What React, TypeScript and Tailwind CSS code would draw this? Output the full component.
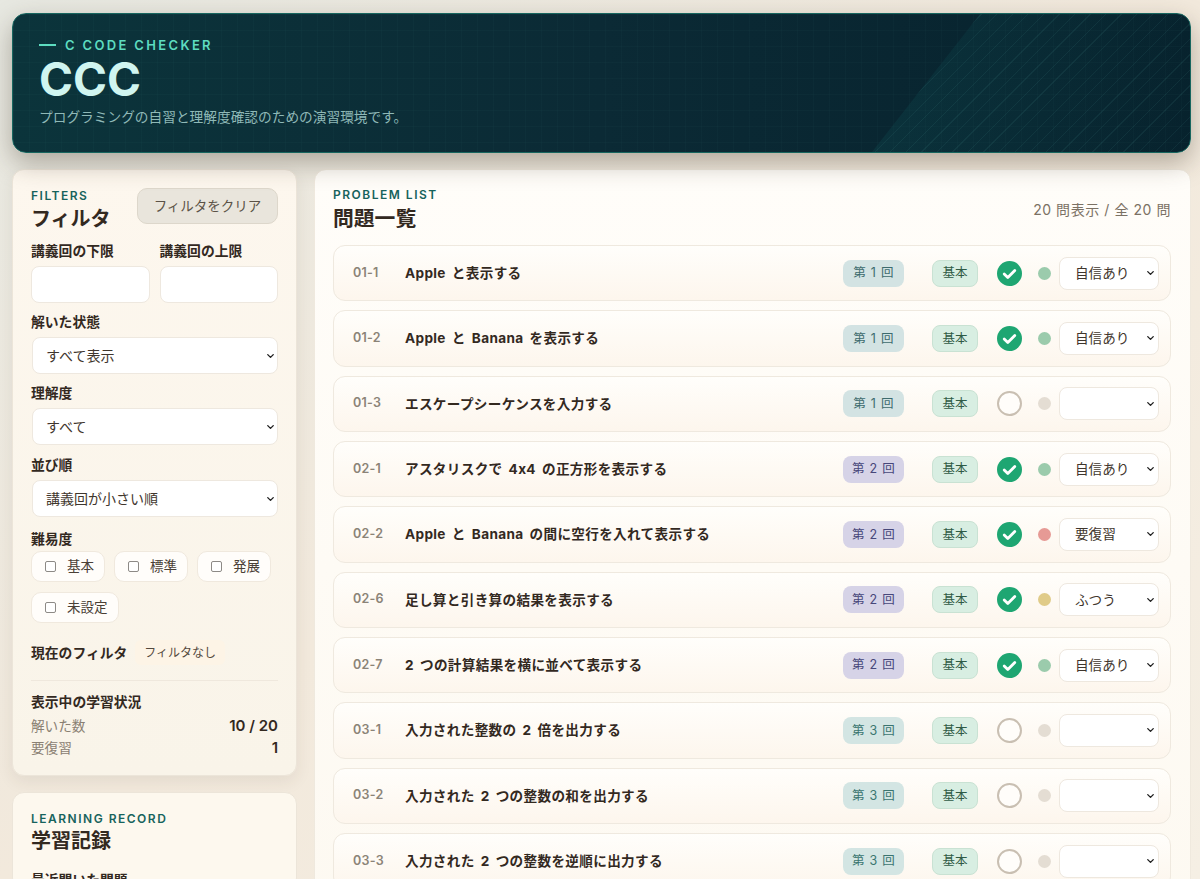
import type { ReactNode } from 'react'
import { ChevronDown } from 'lucide-react'

const FONT = "font-['Inter','Noto_Sans_CJK_JP',sans-serif]"

const problems = [
  { id: '01-1', title: 'Apple と表示する', lecture: 1, done: true, level: '自信あり' },
  { id: '01-2', title: 'Apple と Banana を表示する', lecture: 1, done: true, level: '自信あり' },
  { id: '01-3', title: 'エスケープシーケンスを入力する', lecture: 1, done: false, level: '' },
  { id: '02-1', title: 'アスタリスクで 4x4 の正方形を表示する', lecture: 2, done: true, level: '自信あり' },
  { id: '02-2', title: 'Apple と Banana の間に空行を入れて表示する', lecture: 2, done: true, level: '要復習' },
  { id: '02-6', title: '足し算と引き算の結果を表示する', lecture: 2, done: true, level: 'ふつう' },
  { id: '02-7', title: '2 つの計算結果を横に並べて表示する', lecture: 2, done: true, level: '自信あり' },
  { id: '03-1', title: '入力された整数の 2 倍を出力する', lecture: 3, done: false, level: '' },
  { id: '03-2', title: '入力された 2 つの整数の和を出力する', lecture: 3, done: false, level: '' },
  { id: '03-3', title: '入力された 2 つの整数を逆順に出力する', lecture: 3, done: false, level: '' },
]

const lectureStyle: Record<number, string> = {
  1: 'bg-[#d3e3e3] text-[#3d6b6e]',
  2: 'bg-[#d6d3e7] text-[#47477a]',
  3: 'bg-[#d3e5e3] text-[#3a7570]',
}

const dotStyle: Record<string, string> = {
  '': 'bg-[#e4ddd3]',
  自信あり: 'bg-[#9bcbac]',
  要復習: 'bg-[#e69a95]',
  ふつう: 'bg-[#e0cb88]',
}

function Eyebrow({ children }: { children: ReactNode }) {
  return <div className="text-[12px] leading-[14px] font-semibold tracking-[0.125em] text-[#17635c]">{children}</div>
}

function Label({ children }: { children: ReactNode }) {
  return <div className="text-[13.8px] leading-[18px] font-bold text-[#33291f]">{children}</div>
}

function NativeSelect({ value, options, className, chevron, text }: { value: string; options: string[]; className: string; chevron: string; text: string }) {
  return (
    <div className={`relative ${className}`}>
      <select
        defaultValue={value}
        className={`appearance-none w-full h-full bg-white border border-[#eee8df] rounded-[8px] text-[#3f362d] ${text}`}
      >
        {options.map((o) => (
          <option key={o} value={o}>{o}</option>
        ))}
      </select>
      <ChevronDown size={11} strokeWidth={3} className={`absolute top-1/2 -translate-y-1/2 pointer-events-none text-[#222] ${chevron}`} />
    </div>
  )
}

function Chip({ label }: { label: string }) {
  return (
    <label className="h-[31px] pl-[13px] pr-[10px] flex items-center gap-[11px] bg-[#fffdfa] border border-[#f0e9de] rounded-[10px] text-[13.5px] text-[#4a4036]">
      <input type="checkbox" className="appearance-none w-[11px] h-[11px] bg-white border border-[#8d8a86] rounded-[2px]" />
      {label}
    </label>
  )
}

function Row({ p }: { p: (typeof problems)[number] }) {
  return (
    <div className="h-[56.33px] shrink-0 pl-[19px] pr-[11px] flex items-center rounded-[12px] border border-[#efe9df] bg-gradient-to-b from-[#fffefb] to-[#fdf6ed]">
      <span className="w-[52px] text-[12.5px] font-semibold tracking-[0.02em] text-[#8b8377]">{p.id}</span>
      <span className="flex-1 text-[13.6px] font-bold tracking-[0.025em] [word-spacing:2.5px] text-[#33291f]">{p.title}</span>
      <span className={`w-[61px] h-[27px] pt-[1px] flex items-center justify-center rounded-[8px] text-[12.5px] tracking-[0.02em] [word-spacing:1px] ${lectureStyle[p.lecture]}`}>
        第 {p.lecture} 回
      </span>
      <span className="ml-[28px] w-[46px] h-[27px] pt-[1px] flex items-center justify-center rounded-[8px] border border-[#c9e2d3] bg-[#d8eee2] text-[12.5px] text-[#2f5a45]">
        基本
      </span>
      {p.done ? (
        <svg className="ml-[19px] w-[25px] h-[25px]" viewBox="0 0 25 25">
          <circle cx="12.5" cy="12.5" r="12.5" fill="#1ea672" />
          <path d="M7.2 13l3.6 3.6 7-7.2" fill="none" stroke="#fff" strokeWidth="2.8" strokeLinecap="round" strokeLinejoin="round" />
        </svg>
      ) : (
        <span className="ml-[19px] w-[25px] h-[25px] rounded-full border-2 border-[#c9bfb2] bg-[#fffdfa]" />
      )}
      <span className={`ml-[16px] w-[13px] h-[13px] rounded-full ${dotStyle[p.level]}`} />
      <NativeSelect
        value={p.level}
        options={['', '自信あり', 'ふつう', '要復習']}
        className="ml-[8px] w-[100px] h-[33px]"
        chevron="right-[3px]"
        text="text-[13.6px] pl-[15px]"
      />
    </div>
  )
}

export default function App() {
  return (
    <div className={`${FONT} h-[879px] overflow-hidden bg-gradient-to-br from-[#e7e8e1] via-[#f2e9dc] to-[#f5efe4] pl-[12px] pr-[9px] pt-[13px] text-[#33291f]`}>
      <header className="relative h-[140px] overflow-hidden rounded-[14px] border border-[#17665f] bg-gradient-to-r from-[#0b343b] via-[#0b2a35] to-[#07222d] shadow-[0_10px_26px_rgba(60,50,35,0.35)] px-[26px] pt-[23px]">
        <div className="absolute inset-0 bg-[linear-gradient(rgba(120,220,200,0.025)_1px,transparent_1px),linear-gradient(90deg,rgba(120,220,200,0.025)_1px,transparent_1px)] bg-[size:16px_16px]" />
        <div className="absolute top-0 bottom-0 right-0 w-[318px] bg-[repeating-linear-gradient(135deg,rgba(110,210,200,0.07)_0,rgba(110,210,200,0.07)_1px,transparent_1px,transparent_11px),linear-gradient(100deg,rgba(15,80,85,0.3),rgba(15,80,85,0))] [clip-path:polygon(0_100%,100%_100%,100%_0,34%_0)]" />
        <div className="relative">
          <div className="flex items-center gap-[9px] text-[13px] leading-[16px] font-semibold tracking-[0.18em] text-[#5ddcc0]">
            <span className="w-[17px] h-[2px] bg-[#5ddcc0]" />
            C CODE CHECKER
          </div>
          <h1 className="mt-[3px] text-[46px] leading-[46px] font-bold text-[#d0f5f0]">CCC</h1>
          <p className="mt-[5px] text-[13.7px] leading-[20px] text-[#8fb9b7]">プログラミングの自習と理解度確認のための演習環境です。</p>
        </div>
      </header>

      <div className="mt-[16px] flex gap-[17px] items-start">
        <aside className="w-[285px] shrink-0 flex flex-col gap-[16px]">
          <section className="rounded-[12px] border border-[#ece5d9] bg-gradient-to-b from-[#fdf7ee] to-[#f9f4e9] shadow-[0_6px_16px_rgba(70,55,35,0.08)] px-[18px] pt-[18px] pb-[16px]">
            <div className="flex justify-between h-[54px]">
              <div className="pt-[1px]">
                <Eyebrow>FILTERS</Eyebrow>
                <h2 className="mt-[3px] text-[20px] leading-[27px] font-bold">フィルタ</h2>
              </div>
              <button className="w-[141px] h-[36px] rounded-[10px] border border-[#ddd7cb] bg-[#e9e5dc] text-[13.5px] text-[#5b5247]">フィルタをクリア</button>
            </div>
            <div className="flex gap-[10px]">
              <div className="flex-1">
                <Label>講義回の下限</Label>
                <input className="mt-[6px] w-full h-[37px] bg-white border border-[#eee8df] rounded-[8px]" />
              </div>
              <div className="flex-1">
                <Label>講義回の上限</Label>
                <input className="mt-[6px] w-full h-[37px] bg-white border border-[#eee8df] rounded-[8px]" />
              </div>
            </div>
            <div className="mt-[10px]"><Label>解いた状態</Label></div>
            <NativeSelect value="すべて表示" options={['すべて表示', '解いた問題', '未解答']} className="mt-[6px] ml-[1px] h-[37px]" chevron="right-[2px]" text="text-[14px] pl-[13px]" />
            <div className="mt-[10px]"><Label>理解度</Label></div>
            <NativeSelect value="すべて" options={['すべて', '自信あり', 'ふつう', '要復習']} className="mt-[6px] ml-[1px] h-[37px]" chevron="right-[2px]" text="text-[14px] pl-[13px]" />
            <div className="mt-[11px]"><Label>並び順</Label></div>
            <NativeSelect value="講義回が小さい順" options={['講義回が小さい順', '講義回が大きい順']} className="mt-[6px] ml-[1px] h-[37px]" chevron="right-[2px]" text="text-[14px] pl-[13px]" />
            <div className="mt-[13px]"><Label>難易度</Label></div>
            <div className="mt-[3px] flex flex-wrap gap-x-[9px] gap-y-[10px]">
              <Chip label="基本" />
              <Chip label="標準" />
              <Chip label="発展" />
              <Chip label="未設定" />
            </div>
            <div className="mt-[17px] flex items-center gap-[8px]">
              <Label>現在のフィルタ</Label>
              <span className="h-[25px] px-[9px] flex items-center rounded-[6px] bg-[#fdf4e6] text-[12px] text-[#54493d]">フィルタなし</span>
            </div>
            <div className="mt-[15px] border-t border-[#efe8dd] pt-[12px]">
              <Label>表示中の学習状況</Label>
              <div className="mt-[4px] flex justify-between items-center h-[22px] text-[13.6px] text-[#8a8073]">
                解いた数<span className="text-[15px] font-semibold text-[#33291f]">10 / 20</span>
              </div>
              <div className="flex justify-between items-center h-[22px] text-[13.6px] text-[#8a8073]">
                要復習<span className="text-[15px] font-semibold text-[#33291f]">1</span>
              </div>
            </div>
          </section>

          <section className="rounded-[12px] border border-[#ece5d9] bg-[#fdf8ee] px-[18px] pt-[19px]">
            <Eyebrow>LEARNING RECORD</Eyebrow>
            <h2 className="mt-[2px] text-[20px] leading-[27px] font-bold">学習記録</h2>
            <div className="mt-[16px]"><Label>最近開いた問題</Label></div>
          </section>
        </aside>

        <main className="flex-1 rounded-[12px] border border-[#efe9de] bg-gradient-to-b from-[#fffdf9] to-[#fdf9f1] pl-[18px] pr-[19px] pt-[18px] h-[800px]">
          <div className="flex justify-between items-start h-[57px]">
            <div>
              <Eyebrow>PROBLEM LIST</Eyebrow>
              <h2 className="mt-[3px] text-[20.8px] leading-[27px] font-bold">問題一覧</h2>
            </div>
            <div className="mt-[12px] text-[14px] leading-[20px] tracking-[0.04em] text-[#7b7164]">20 問表示 / 全 20 問</div>
          </div>
          <div className="flex flex-col gap-[9px]">
            {problems.map((p) => (
              <Row key={p.id} p={p} />
            ))}
          </div>
        </main>
      </div>
    </div>
  )
}
